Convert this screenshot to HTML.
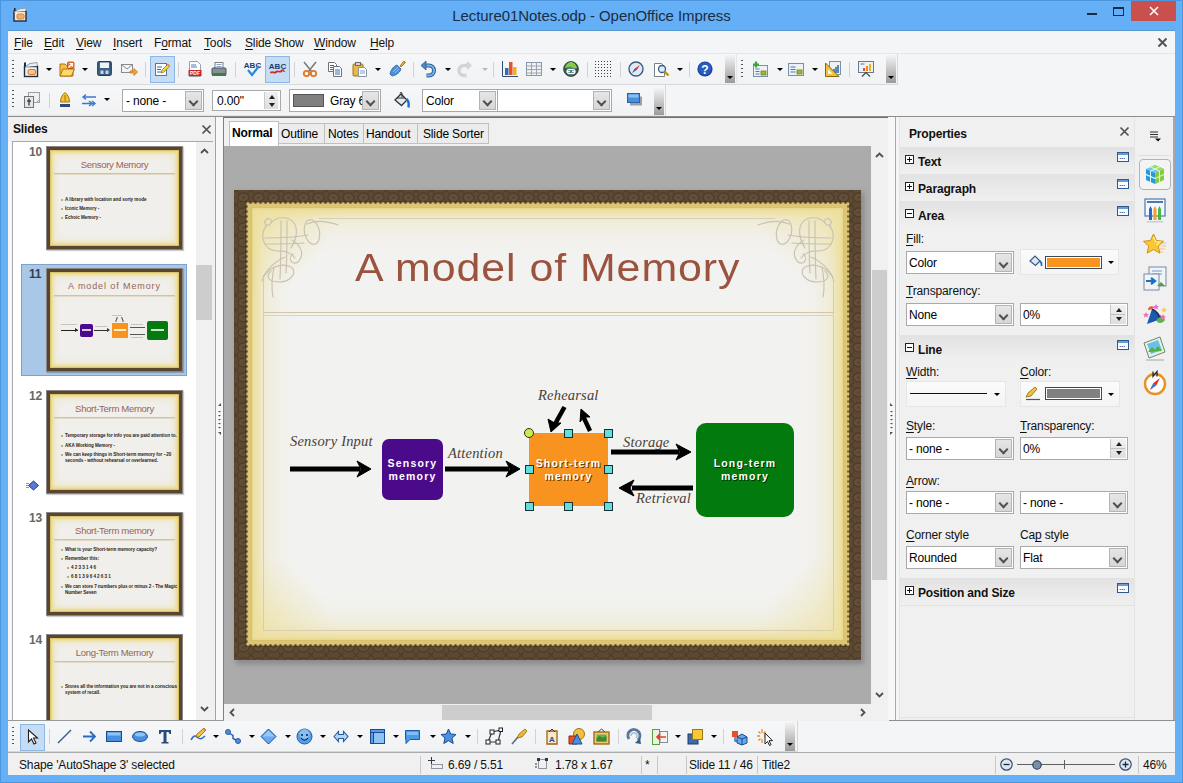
<!DOCTYPE html>
<html><head><meta charset="utf-8">
<style>
*{box-sizing:border-box}
body{margin:0;width:1183px;height:783px;position:relative;overflow:hidden;background:#64aff6;font-family:"Liberation Sans",sans-serif;font-size:12px;color:#000}
.a{position:absolute}
.t{position:absolute;white-space:nowrap;line-height:1}
.ul{text-decoration:underline;text-underline-offset:2px;text-decoration-thickness:1px}
svg{position:absolute;overflow:visible}
.dd{position:absolute;width:0;height:0;border-left:3px solid transparent;border-right:3px solid transparent;border-top:3px solid #000}
.sep{position:absolute;width:1px;background:#d0d2d5}
.grip{position:absolute;width:2px;background:repeating-linear-gradient(#555 0 1px,transparent 1px 4px)}
.combo{position:absolute;background:#fff;border:1px solid #a9a9a9}
.cbtn{position:absolute;top:1px;bottom:1px;right:1px;width:17px;background:linear-gradient(#e6e6e6,#d6d6d6);border:1px solid #b4b4b4}
.cbtn:after{content:"";position:absolute;left:4px;top:6px;width:5px;height:5px;border-right:2px solid #505050;border-bottom:2px solid #505050;transform:rotate(45deg)}
</style></head><body>
<!-- window frame -->
<div class="a" style="left:0;top:0;width:1183px;height:1px;background:#4c96de"></div>
<div class="a" style="left:0;top:0;width:1px;height:783px;background:#4c96de"></div>
<div class="a" style="right:0;top:0;width:1px;height:783px;background:#4c96de"></div>
<div class="a" style="left:0;bottom:0;width:1183px;height:1px;background:#4c96de"></div>
<!-- app icon -->
<svg style="left:13px;top:7px" width="14" height="15"><rect x="1" y="4" width="12" height="10" fill="#f4e8d8" stroke="#1c2a40" stroke-width="1.4"/><rect x="4" y="7" width="7" height="5" rx="1.5" fill="#f0b070" stroke="#d07020" stroke-width=".8"/><path d="M1 5L6 2L13 1L13 4" fill="#e6ecf2" stroke="#8a9ab0" stroke-width="1"/><rect x="1" y="1" width="1.5" height="3" fill="#1c2a40"/></svg>
<!-- title -->
<div class="t" style="left:0;width:1183px;top:8px;text-align:center;font-size:15px;color:#1c2c42;letter-spacing:-.08px">Lecture01Notes.odp - OpenOffice Impress</div>
<!-- title buttons -->
<div class="a" style="left:1087px;top:13px;width:10px;height:2px;background:#1c2c42"></div>
<div class="a" style="left:1113px;top:7px;width:11px;height:9px;border:1px solid #1c2c42;border-top-width:2px"></div>
<div class="a" style="left:1131px;top:1px;width:45px;height:20px;background:#c9504d"></div>
<svg style="left:1149px;top:6px" width="10" height="10"><path d="M1 1L9 9M9 1L1 9" stroke="#fff" stroke-width="1.5"/></svg>
<div class="a" style="left:8px;top:30px;width:1167px;height:1px;background:#5a98d4"></div>
<!-- client -->
<div class="a" style="left:8px;top:31px;width:1167px;height:744px;background:#f4f5f7"></div>
<!-- menu -->
<div class="a" style="left:8px;top:53px;width:1167px;height:1px;background:#e4e6e9"></div>
<div class="t" style="left:14px;top:37px;font-size:12px;letter-spacing:-.15px;color:#111">
<span class="a" style="left:0"><span class="ul">F</span>ile</span>
<span class="a" style="left:30px"><span class="ul">E</span>dit</span>
<span class="a" style="left:62px"><span class="ul">V</span>iew</span>
<span class="a" style="left:99px"><span class="ul">I</span>nsert</span>
<span class="a" style="left:140px">F<span class="ul">o</span>rmat</span>
<span class="a" style="left:190px"><span class="ul">T</span>ools</span>
<span class="a" style="left:231px"><span class="ul">S</span>lide Show</span>
<span class="a" style="left:300px"><span class="ul">W</span>indow</span>
<span class="a" style="left:356px"><span class="ul">H</span>elp</span>
</div>
<svg style="left:1158px;top:38px" width="9" height="9"><path d="M.5 .5L8.5 8.5M8.5 .5L.5 8.5" stroke="#505050" stroke-width="1.8"/></svg>
<!-- toolbar row 1 -->
<div class="a" style="left:8px;top:54px;width:890px;height:31px;background:linear-gradient(#f6f7f9,#f1f2f4);border-bottom:1px solid #d6d8db"></div>
<div class="a" style="left:736px;top:54px;width:162px;height:31px;border-right:1px solid #d6d8db;border-left:1px solid #e6e8ea"></div>
<div class="grip" style="left:12px;top:60px;height:18px"></div>
<!-- new -->
<svg style="left:23px;top:61px" width="16" height="16"><rect x="1.5" y="5.5" width="13" height="10" fill="#f6efe6" stroke="#1e2d45" stroke-width="1.4"/><rect x="5" y="8.5" width="7.5" height="5" rx="1.5" fill="#f6c48e" stroke="#d9782a"/><path d="M2 6L7 2.5L14 1.5L14.5 5" fill="#e8eef4" stroke="#8e9cb0"/><rect x="1" y="1.5" width="2" height="4" fill="#1e2d45"/></svg>
<div class="dd" style="left:46px;top:68px"></div>
<!-- open -->
<svg style="left:59px;top:61px" width="16" height="16"><path d="M1 3h5l1.5 1.5H14V15H1z" fill="#f6c040" stroke="#a87410"/><path d="M1 15l3-7h11.5l-3 7z" fill="#ffd86a" stroke="#a87410"/><rect x="8.5" y="1" width="6.5" height="6.5" rx="1" fill="#f08040" stroke="#b04a10" stroke-width=".8"/><path d="M9.5 6.5l4-4M10.5 2.5h3v3" stroke="#fff" stroke-width="1.2" fill="none"/></svg>
<div class="dd" style="left:82px;top:68px"></div>
<!-- save -->
<svg style="left:97px;top:61px" width="15" height="15"><rect x=".7" y=".7" width="13.6" height="13.6" rx="1.5" fill="#3e6286" stroke="#24405e" stroke-width="1.2"/><rect x="3" y="1.5" width="9" height="5.5" fill="#eef2f6"/><rect x="3.5" y="9.5" width="3" height="3.5" fill="#c8d4e0"/><rect x="8.5" y="9.5" width="3" height="3.5" fill="#c8d4e0"/></svg>
<!-- mail -->
<svg style="left:121px;top:61px" width="17" height="16"><rect x=".5" y="3.5" width="11" height="8" fill="#f4f4f4" stroke="#8c8c8c"/><path d="M.5 3.5l5.5 4.5 5.5-4.5" fill="none" stroke="#8c8c8c"/><path d="M9 10h4V7.5l3.5 3.5-3.5 3.5V12H9z" fill="#f5a63a" stroke="#c97410" stroke-width=".8"/></svg>
<div class="sep" style="left:145px;top:62px;height:15px"></div>
<!-- edit toggle -->
<div class="a" style="left:150px;top:56px;width:25px;height:27px;background:#c4dcf4;border:1px solid #8db6e2"></div>
<svg style="left:154px;top:61px" width="16" height="16"><rect x="1.5" y="2.5" width="11" height="12" fill="#fff" stroke="#6a7480"/><path d="M3 6h5M3 8.5h4M3 11h4" stroke="#3a6aa8"/><path d="M7 12l1-3 6-6 2 2-6 6z" fill="#f8d040" stroke="#9a7a10" stroke-width=".8"/><path d="M13 4l2 2 1-1-2-2z" fill="#e89090"/></svg>
<div class="sep" style="left:178px;top:62px;height:15px"></div>
<!-- pdf -->
<svg style="left:187px;top:61px" width="16" height="16"><path d="M2.5 .5h8l3 3v12h-11z" fill="#fff" stroke="#9aa0a8"/><path d="M4 4h5M4 6h6" stroke="#4b7ac0"/><rect x="1.5" y="9" width="13" height="6" fill="#c8262a"/><text x="8" y="14" font-size="5" font-family="Liberation Sans" font-weight="bold" fill="#fff" text-anchor="middle">PDF</text></svg>
<!-- print -->
<svg style="left:211px;top:61px" width="16" height="16"><rect x="4" y="1.5" width="8" height="6" fill="#fff" stroke="#7a8088"/><path d="M5.5 3.5h5M5.5 5.5h5" stroke="#6a8ab8" stroke-width=".8"/><rect x="1" y="7" width="14" height="7" rx="1" fill="#8a9098" stroke="#4a5058"/><rect x="1" y="12" width="14" height="3" fill="#3e7a4a"/></svg>
<div class="sep" style="left:235px;top:62px;height:15px"></div>
<!-- spell -->
<svg style="left:244px;top:60px" width="17" height="17"><text x="8.5" y="8" font-size="8" font-family="Liberation Sans" font-weight="bold" fill="#1e3a70" text-anchor="middle">ABC</text><path d="M4 10l4 5 7-9" fill="none" stroke="#2a8ae0" stroke-width="2.2"/></svg>
<!-- autospell toggle -->
<div class="a" style="left:265px;top:56px;width:25px;height:27px;background:#c4dcf4;border:1px solid #8db6e2"></div>
<svg style="left:269px;top:60px" width="17" height="17"><text x="8.5" y="9" font-size="8" font-family="Liberation Sans" font-weight="bold" fill="#1e3a70" text-anchor="middle">ABC</text><path d="M1.5 13c2-2.5 3.5 1 5.5-1s3.5 1 5.5-1 2.5.5 3 0" fill="none" stroke="#d22828" stroke-width="1.8"/></svg>
<div class="sep" style="left:294px;top:62px;height:15px"></div>
<!-- cut -->
<svg style="left:302px;top:61px" width="16" height="16"><path d="M2 1l8 10M14 1L6 11" stroke="#7a7a7a" stroke-width="1.5"/><circle cx="4.5" cy="12.5" r="2.7" fill="none" stroke="#e0782a" stroke-width="1.8"/><circle cx="11.5" cy="12.5" r="2.7" fill="none" stroke="#e0782a" stroke-width="1.8"/></svg>
<!-- copy -->
<svg style="left:327px;top:61px" width="16" height="16"><path d="M1.5 1.5h6l2 2v7h-8z" fill="#fff" stroke="#6a7480"/><path d="M3 4.5h4M3 6.5h4M3 8.5h3" stroke="#3a6ab0"/><path d="M6.5 5.5h6l2 2v8h-8z" fill="#fff" stroke="#6a7480"/><path d="M8 9h5M8 11h5M8 13h5" stroke="#3a6ab0"/></svg>
<!-- paste -->
<svg style="left:352px;top:61px" width="16" height="16"><rect x="1" y="3" width="10" height="12" rx="1" fill="#e8b848" stroke="#9a7420"/><rect x="3.5" y="1.5" width="5" height="3" fill="#d0d4d8" stroke="#6a6e72"/><path d="M6.5 6.5h6l2 2v7h-8z" fill="#fff" stroke="#8a94a0"/><path d="M8 10h5M8 12h5" stroke="#5a86c0" stroke-width=".8"/></svg>
<div class="dd" style="left:375px;top:68px"></div>
<!-- clone brush -->
<svg style="left:389px;top:60px" width="17" height="17"><path d="M11 6l4-5 1.5 1.5-4.5 4.5z" fill="#e8a830" stroke="#9a6a10" stroke-width=".8"/><path d="M1 14c1-5 4-8 7-9l4 4c-1 3-4 6-9 7z" fill="#4a90d8" stroke="#2a5a98" stroke-width=".8"/><path d="M4 12l5-5M6 13l4-4" stroke="#a8d0f8" stroke-width=".8"/></svg>
<div class="sep" style="left:413px;top:62px;height:15px"></div>
<!-- undo -->
<svg style="left:420px;top:61px" width="17" height="16"><path d="M4.5 4.5H9a5 5 0 0 1 0 10H6.5" fill="none" stroke="#2a5e96" stroke-width="4"/><path d="M4.5 4.5H9a5 5 0 0 1 0 10H6.5" fill="none" stroke="#7ab4e8" stroke-width="2"/><path d="M1 4.5L6 0v9z" fill="#4a86c8" stroke="#2a5e96" stroke-width=".8"/></svg>
<div class="dd" style="left:445px;top:68px"></div>
<!-- redo disabled -->
<svg style="left:457px;top:61px" width="16" height="16"><path d="M11.5 4.5H7a5 5 0 0 0 0 10h2.5" fill="none" stroke="#d2d4d6" stroke-width="3.5"/><path d="M15 4.5L10 0v9z" fill="#d2d4d6"/></svg>
<div class="dd" style="left:482px;top:68px;border-top-color:#b8b8b8"></div>
<div class="sep" style="left:493px;top:62px;height:15px"></div>
<!-- chart -->
<svg style="left:502px;top:61px" width="16" height="16"><path d="M.5 0v15.5H16" fill="none" stroke="#2a4a78"/><rect x="3" y="7" width="3.5" height="7" fill="#3a6aa8"/><rect x="7" y="1" width="3.5" height="13" fill="#e8502a"/><rect x="11" y="6" width="3.5" height="8" fill="#f0b020"/></svg>
<!-- table -->
<svg style="left:526px;top:62px" width="16" height="14"><rect x=".5" y=".5" width="15" height="13" fill="#f0f2f4" stroke="#8a96a6"/><path d="M.5 4h15M.5 7.5h15M.5 11h15M5.5 .5v13M10.5 .5v13" stroke="#9aa6b4"/></svg>
<div class="dd" style="left:550px;top:68px"></div>
<!-- globe -->
<svg style="left:563px;top:61px" width="16" height="16"><circle cx="8" cy="8" r="7.4" fill="#3a5a48" stroke="#22342a" stroke-width=".8"/><path d="M2 7c1-4 4-6 6-6s5 2 6 6c-2 1-4 0-6-1s-4 1-6 1z" fill="#8acc48"/><circle cx="8" cy="10" r="4.5" fill="#6aa0b0" opacity=".6"/><path d="M4 10.5h3M9 10.5h3" stroke="#fff" stroke-width="1.6"/><rect x="4" y="8.5" width="8" height="4" rx="2" fill="none" stroke="#fff" stroke-width="1.2"/></svg>
<div class="sep" style="left:587px;top:62px;height:15px"></div>
<!-- grid -->
<svg style="left:595px;top:61px" width="17" height="16"><g fill="#303030"><rect x="0" y="0" width="1" height="1"/></g><path d="M0 .5h17M0 3.5h17M0 6.5h17M0 9.5h17M0 12.5h17M0 15.5h17" stroke="#404040" stroke-dasharray="1 2"/></svg>
<div class="sep" style="left:620px;top:62px;height:15px"></div>
<!-- navigator -->
<svg style="left:628px;top:61px" width="16" height="16"><circle cx="8" cy="8" r="7" fill="#dceaf6" stroke="#405878" stroke-width="1.4"/><path d="M12 4L7 7.5 4 12l5-3.5z" fill="#e02a2a"/><path d="M7 7.5l2 1L4 12z" fill="#2a6ad0"/></svg>
<!-- zoom -->
<svg style="left:653px;top:61px" width="16" height="16"><path d="M1.5 2.5h7l3 3v10h-10z" fill="#fff" stroke="#7a8088"/><circle cx="9" cy="8" r="3.5" fill="#d8ecfa" stroke="#3a5a80" stroke-width="1.3"/><path d="M11.5 10.5l4 4" stroke="#c88a20" stroke-width="2.4"/></svg>
<div class="dd" style="left:677px;top:68px"></div>
<div class="sep" style="left:689px;top:62px;height:15px"></div>
<!-- help -->
<svg style="left:697px;top:61px" width="16" height="16"><circle cx="8" cy="8" r="7.6" fill="#1a44a0"/><circle cx="8" cy="7.5" r="6.3" fill="#2a5cc0"/><text x="8" y="12.5" font-size="12" font-family="Liberation Sans" font-weight="bold" fill="#fff" text-anchor="middle">?</text></svg>
<!-- overflow -->
<div class="a" style="left:725px;top:55px;width:10px;height:28px;background:linear-gradient(#f4f4f4,#9a9a9a)"></div>
<div class="dd" style="left:727px;top:76px;border-left-width:3px;border-right-width:3px"></div>
<!-- toolbar 2 -->
<div class="grip" style="left:741px;top:60px;height:18px"></div>
<svg style="left:752px;top:61px" width="16" height="16"><rect x="1.5" y="4.5" width="14" height="11" fill="#eef2f6" stroke="#7890a8"/><path d="M3.5 8h4M3.5 10.5h4M3.5 13h4" stroke="#4a7ac0"/><rect x="9" y="10" width="5" height="4" fill="#9ab838" stroke="#6a8a18" stroke-width=".8"/><path d="M4 .5v6M1 3.5h6" stroke="#38a830" stroke-width="2.2"/></svg>
<div class="dd" style="left:777px;top:68px"></div>
<svg style="left:788px;top:62px" width="16" height="15"><rect x=".5" y="1.5" width="15" height="12" fill="#eef2f6" stroke="#7890a8"/><path d="M2.5 5h5M2.5 7.5h5M2.5 10h5" stroke="#4a7ac0"/><rect x="9" y="8" width="5" height="4" fill="#9ab838" stroke="#6a8a18" stroke-width=".8"/></svg>
<div class="dd" style="left:812px;top:68px"></div>
<svg style="left:825px;top:61px" width="16" height="16"><rect x="4.5" y=".5" width="11" height="13" fill="#eef2f6" stroke="#7890a8"/><path d="M9 8v4M11 6v6M13 4v8" stroke="#3a6aa8" stroke-width="1.6"/><path d="M.5 2v13.5H14z" fill="#f2c030" stroke="#8a6a10"/><path d="M3 8v5h5z" fill="#eef2f6"/></svg>
<div class="sep" style="left:849px;top:62px;height:15px"></div>
<svg style="left:858px;top:61px" width="16" height="16"><rect x=".5" y=".5" width="15" height="11" fill="#eef2f6" stroke="#6a7890"/><path d="M2.5 3h4" stroke="#4a7ac0"/><rect x="5" y="7" width="2" height="3" fill="#e0502a"/><rect x="8" y="5" width="2" height="5" fill="#f08a20"/><rect x="11" y="3" width="2" height="7" fill="#f0b020"/><path d="M4 15.5l4-4 4 4" fill="none" stroke="#404850" stroke-width="1.2"/></svg>
<div class="a" style="left:886px;top:55px;width:10px;height:28px;background:linear-gradient(#f4f4f4,#9a9a9a)"></div>
<div class="dd" style="left:888px;top:76px"></div>

<!-- toolbar row 2 -->
<div class="a" style="left:8px;top:85px;width:658px;height:31px;background:linear-gradient(#f6f7f9,#f1f2f4);border-right:1px solid #d6d8db;border-bottom:1px solid #e0e2e5"></div>
<div class="grip" style="left:12px;top:90px;height:18px"></div>
<svg style="left:24px;top:92px" width="16" height="16"><rect x="4.5" y=".5" width="11" height="10" fill="#eef0f2" stroke="#9aa0a8"/><path d="M12.5 10.5l3-3" stroke="#9aa0a8"/><rect x=".5" y="4.5" width="9" height="11" fill="#e4e6e8" stroke="#707478"/><path d="M5 6.5v7M3 9h4" stroke="#404448" stroke-width="1.4"/></svg>
<div class="sep" style="left:49px;top:93px;height:15px"></div>
<svg style="left:58px;top:92px" width="14" height="16"><path d="M7 .5C4 3 2.5 6 2.5 10h9C11.5 6 10 3 7 .5z" fill="#f6c030" stroke="#a07810"/><path d="M7 3v6" stroke="#a07810"/><rect x="2" y="12" width="10" height="3" fill="#2a4a80"/></svg>
<svg style="left:81px;top:94px" width="16" height="13"><path d="M15 3H2M5 .5L2 3l3 2.5" fill="none" stroke="#3a7ad0" stroke-width="1.4"/><path d="M1 9.5h13M11 7l3 2.5-3 2.5M8 7l3 2.5-3 2.5" fill="none" stroke="#3a7ad0" stroke-width="1.4"/></svg>
<div class="dd" style="left:104px;top:98px"></div>
<div class="combo" style="left:122px;top:89px;width:82px;height:23px"><div class="t" style="left:3px;top:5px;font-size:12px;letter-spacing:-.15px">- none -</div><div class="cbtn"></div></div>
<div class="combo" style="left:212px;top:90px;width:69px;height:21px"><div class="t" style="left:4px;top:4px;font-size:12px;letter-spacing:-.15px">0.00"</div>
<div class="a" style="right:2px;top:1px;width:14px;height:17px;background:linear-gradient(#f0f0f0,#dcdcdc);border-left:1px solid #c8c8c8"></div>
<div class="a" style="right:5px;top:4px;width:0;height:0;border-left:3.5px solid transparent;border-right:3.5px solid transparent;border-bottom:4px solid #202020"></div>
<div class="a" style="right:5px;top:12px;width:0;height:0;border-left:3.5px solid transparent;border-right:3.5px solid transparent;border-top:4px solid #202020"></div></div>
<div class="combo" style="left:289px;top:89px;width:92px;height:23px"><div class="a" style="left:3px;top:4px;width:31px;height:13px;background:#808080;border:1px solid #555"></div><div class="t" style="left:40px;top:5px;font-size:12px;letter-spacing:-.15px">Gray 6</div><div class="cbtn"></div></div>
<svg style="left:393px;top:92px" width="17" height="16"><path d="M2 8l6-6 6 6-5.5 5.5z" fill="#e4e8ec" stroke="#303438" stroke-width="1.3"/><path d="M4 6h8" stroke="#303438"/><path d="M7 1.5c0-1.5 2-1.5 2 0v4" fill="none" stroke="#303438"/><path d="M13.5 7c2.5 2 2.5 5 2 8.5" fill="none" stroke="#1a70d0" stroke-width="2.4"/></svg>
<div class="combo" style="left:422px;top:89px;width:76px;height:23px"><div class="t" style="left:3px;top:5px;font-size:12px;letter-spacing:-.15px">Color</div><div class="cbtn"></div></div>
<div class="combo" style="left:497px;top:89px;width:115px;height:23px"><div class="cbtn"></div></div>
<svg style="left:627px;top:93px" width="16" height="14"><rect x="3" y="3.5" width="12" height="9" fill="#9aa0a8"/><rect x=".5" y=".5" width="12" height="9" fill="#4a90e0" stroke="#2a60a8"/><rect x="1.5" y="1.5" width="10" height="3" fill="#8ac0f0"/></svg>
<div class="a" style="left:654px;top:88px;width:10px;height:27px;background:linear-gradient(#f4f4f4,#9a9a9a)"></div>
<div class="dd" style="left:656px;top:107px"></div>
<div class="a" style="left:8px;top:116px;width:1167px;height:1px;background:#8c8e90"></div>
<style>
.th{position:absolute;left:46px;width:137px;height:104px;background:#5a4530;border:1px solid #8a8580;box-shadow:1px 1px 1px rgba(0,0,0,.2)}
.th .g{position:absolute;left:3px;top:3px;right:3px;bottom:3px;background:#f0efec;box-shadow:inset 0 0 1px 1px #d8c068,inset 0 0 3px 3px #ecdc90,inset 0 0 8px 3px rgba(238,224,160,.8)}
.th .sl{position:absolute;left:7px;right:7px;top:26px;height:2px;border-top:1px solid #cfc3a0;border-bottom:1px solid #e2dac2}
.th .tt{position:absolute;left:0;right:0;top:13px;text-align:center;font-size:9.6px;color:#9a6450;white-space:nowrap;line-height:1;letter-spacing:-.35px}
.th .bl{position:absolute;left:18px;font-size:4.6px;font-weight:bold;color:#2e1e14;white-space:nowrap;line-height:1;letter-spacing:-.05px}
.th .bl.nb:before{display:none}
.th .bl:before{content:"";position:absolute;left:-4px;top:1px;width:2px;height:2px;background:#b8b070}
.num{position:absolute;left:29px;font-size:12px;font-weight:bold;color:#666;line-height:1;letter-spacing:-.2px;margin-top:-1px}
</style>
<div class="a" style="left:8px;top:117px;width:207px;height:604px;background:#f0f0f0"></div>
<div class="a" style="left:215px;top:117px;width:1px;height:604px;background:#a2a2a2"></div>
<div class="a" style="left:219px;top:117px;width:4px;height:604px;background:#f0f0f0"></div>
<div class="t" style="left:13px;top:123px;font-size:12px;letter-spacing:-.15px;font-weight:bold;color:#111">Slides</div>
<svg style="left:202px;top:125px" width="9" height="9"><path d="M.5 .5L8.5 8.5M8.5 .5L.5 8.5" stroke="#505050" stroke-width="1.7"/></svg>
<div class="a" style="left:8px;top:142px;width:4px;height:578px;background:#f7f7f7"></div>
<div class="a" style="left:12px;top:141px;width:201px;height:1px;background:#a8a8a8"></div>
<div class="a" style="left:12px;top:142px;width:200px;height:578px;background:#fff;border-left:1px solid #a8a8a8"></div>
<div class="a" style="left:196px;top:142px;width:16px;height:578px;background:#f0f0f0"></div>
<div class="a" style="left:196px;top:265px;width:16px;height:55px;background:#cdcdcd"></div>
<svg style="left:200px;top:148px" width="9" height="6"><path d="M1 5L4.5 1.5 8 5" fill="none" stroke="#505050" stroke-width="1.8"/></svg>
<svg style="left:200px;top:706px" width="9" height="6"><path d="M1 1L4.5 4.5 8 1" fill="none" stroke="#505050" stroke-width="1.8"/></svg>
<!-- selected bg for slide 11 -->
<div class="a" style="left:21px;top:264px;width:166px;height:112px;background:#a9c8e8;border:1px solid #7da3cb"></div>

<div class="num" style="top:147px">10</div>
<div class="th" style="top:146px"><div class="g"></div><div class="sl"></div><div class="tt">Sensory Memory</div>
<div class="bl" style="top:51px">A library with location and sorty mode</div>
<div class="bl" style="top:60px">Iconic Memory -</div>
<div class="bl" style="top:69px">Echoic Memory -</div></div>

<div class="num" style="top:269px;color:#34404e">11</div>
<div class="th" style="top:268px"><div class="g"></div><div class="sl"></div><div class="tt" style="letter-spacing:.9px;font-size:9px;top:13px">A model of Memory</div>
<div class="a" style="left:14px;top:61px;width:17px;height:1px;background:#222"></div>
<div class="a" style="left:28px;top:59px;border-left:3px solid #222;border-top:2px solid transparent;border-bottom:2px solid transparent"></div>
<div class="a" style="left:33px;top:55px;width:13px;height:13px;background:#4b0a8c;border-radius:2px"></div>
<div class="a" style="left:47px;top:61px;width:14px;height:1px;background:#333"></div>
<div class="a" style="left:60px;top:59px;border-left:3px solid #333;border-top:2px solid transparent;border-bottom:2px solid transparent"></div>
<div class="a" style="left:65px;top:54px;width:16px;height:15px;background:#f7931e"></div>
<div class="a" style="left:83px;top:58px;width:15px;height:1px;background:#555"></div>
<div class="a" style="left:83px;top:65px;width:15px;height:1px;background:#555"></div>
<div class="a" style="left:100px;top:52px;width:21px;height:19px;background:#067a10;border-radius:2px"></div>
<div class="a" style="left:35px;top:60px;width:9px;height:2px;background:#d8c8f0"></div>
<div class="a" style="left:67px;top:60px;width:12px;height:2px;background:#fff0d0"></div>
<div class="a" style="left:104px;top:60px;width:13px;height:2px;background:#c0f0c0"></div>
<div class="a" style="left:14px;top:55px;width:16px;height:1px;background:#c8c4bc"></div>
<div class="a" style="left:48px;top:57px;width:12px;height:1px;background:#c8c4bc"></div>
<div class="a" style="left:84px;top:55px;width:12px;height:1px;background:#c8c4bc"></div>
<div class="a" style="left:84px;top:68px;width:12px;height:1px;background:#c8c4bc"></div>
<div class="a" style="left:65px;top:46px;width:10px;height:1px;background:#c8c4bc"></div>
<div class="a" style="left:69px;top:48px;width:1px;height:5px;background:#444;transform:rotate(20deg)"></div>
<div class="a" style="left:75px;top:48px;width:1px;height:5px;background:#444;transform:rotate(-20deg)"></div>
</div>

<div class="num" style="top:391px">12</div>
<div class="th" style="top:390px"><div class="g"></div><div class="sl"></div><div class="tt">Short-Term Memory</div>
<div class="bl" style="top:43px">Temporary storage for info you are paid attention to.</div>
<div class="bl" style="top:53px">AKA Working Memory -</div>
<div class="bl" style="top:62px">We can keep things in Short-term memory for ~20</div>
<div class="bl nb" style="top:68px;left:18px">seconds - without rehearsal or overlearned.</div></div>
<svg style="left:26px;top:480px" width="14" height="11"><path d="M7.5 1l5 4.5-5 4.5-5-4.5z" fill="#5a78d8" stroke="#203880"/><path d="M0 3.5h3M0 5.5h2M0 7.5h3" stroke="#6a78a0" stroke-width=".8"/></svg>

<div class="num" style="top:513px">13</div>
<div class="th" style="top:512px"><div class="g"></div><div class="sl"></div><div class="tt">Short-Term memory</div>
<div class="bl" style="top:35px">What is your Short-term memory capacity?</div>
<div class="bl" style="top:44px">Remember this:</div>
<div class="bl" style="top:53px;left:24px">4 2 3 3 1 4 6</div>
<div class="bl" style="top:62px;left:24px">6 8 1 3 9 6 4 2 6 3 1</div>
<div class="bl" style="top:72px">We can store 7 numbers plus or minus 2 - The Magic</div>
<div class="bl nb" style="top:78px;left:18px">Number Seven</div></div>

<div class="num" style="top:635px">14</div>
<div class="th" style="top:634px;height:87px;border-bottom:none;box-shadow:none"><div class="g" style="bottom:-20px"></div><div class="sl"></div><div class="tt">Long-Term Memory</div>
<div class="bl" style="top:50px">Stores all the information you are not in a conscious</div>
<div class="bl nb" style="top:56px;left:18px">system of recall.</div></div>
<div class="a" style="left:12px;top:720px;width:200px;height:1px;background:#a8a8a8"></div>
<!-- main area -->
<div class="a" style="left:223px;top:117px;width:666px;height:604px;background:#f0f0f0;border-left:1px solid #808080;border-top:1px solid #707070"></div>
<div class="a" style="left:888px;top:117px;width:1px;height:604px;background:#e8e8e8"></div>
<!-- tabs -->
<div class="a" style="left:277px;top:123px;width:48px;height:21px;background:#ececec;border:1px solid #c0c0c0"></div>
<div class="a" style="left:324px;top:123px;width:40px;height:21px;background:#ececec;border:1px solid #c0c0c0"></div>
<div class="a" style="left:363px;top:123px;width:55px;height:21px;background:#ececec;border:1px solid #c0c0c0"></div>
<div class="a" style="left:417px;top:123px;width:72px;height:21px;background:#ececec;border:1px solid #c0c0c0"></div>
<div class="a" style="left:229px;top:121px;width:50px;height:25px;background:#fff;border:1px solid #c0c0c0;border-bottom:none"></div>
<div class="t" style="left:232px;top:127px;font-size:12px;letter-spacing:-.15px;font-weight:bold">Normal</div>
<div class="t" style="left:281px;top:128px;font-size:12px;letter-spacing:-.15px">Outline</div>
<div class="t" style="left:328px;top:128px;font-size:12px;letter-spacing:-.15px">Notes</div>
<div class="t" style="left:366px;top:128px;font-size:12px;letter-spacing:-.15px">Handout</div>
<div class="t" style="left:423px;top:128px;font-size:12px;letter-spacing:-.15px">Slide Sorter</div>
<!-- canvas -->
<div class="a" style="left:224px;top:146px;width:647px;height:558px;background:#ababab;overflow:hidden">
  <div class="a" style="left:12px;top:46px;width:628px;height:472px;background:#8a8a8a;filter:blur(2.5px)"></div>
</div>
<!-- vertical scrollbar -->
<div class="a" style="left:871px;top:146px;width:17px;height:558px;background:#f0f0f0"></div>
<div class="a" style="left:872px;top:270px;width:15px;height:310px;background:#cdcdcd"></div>
<svg style="left:875px;top:152px" width="9" height="6"><path d="M1 5L4.5 1.5 8 5" fill="none" stroke="#505050" stroke-width="1.8"/></svg>
<svg style="left:875px;top:692px" width="9" height="6"><path d="M1 1L4.5 4.5 8 1" fill="none" stroke="#505050" stroke-width="1.8"/></svg>
<!-- horizontal scrollbar -->
<div class="a" style="left:224px;top:704px;width:647px;height:17px;background:#f0f0f0"></div>
<div class="a" style="left:442px;top:705px;width:210px;height:15px;background:#cdcdcd"></div>
<svg style="left:229px;top:708px" width="6" height="9"><path d="M5 1L1.5 4.5 5 8" fill="none" stroke="#505050" stroke-width="1.8"/></svg>
<svg style="left:860px;top:708px" width="6" height="9"><path d="M1 1L4.5 4.5 1 8" fill="none" stroke="#505050" stroke-width="1.8"/></svg>
<!-- splitter -->
<div class="a" style="left:216px;top:117px;width:7px;height:604px;background:#f7f7f7"></div>
<div class="a" style="left:888px;top:117px;width:7px;height:604px;background:#f7f7f7"></div>
<svg style="left:217px;top:402px" width="5" height="34"><g fill="#505050"><path d="M1 4l3-3v3z"/><path d="M1 9h3l-1.5 1.5zM1 13h3l-1.5 1.5zM1 17h3l-1.5 1.5zM1 21h3l-1.5 1.5zM1 25h3l-1.5 1.5z"/><path d="M1 30l3 3v-3z"/></g></svg>
<svg style="left:889px;top:402px" width="5" height="34"><g fill="#505050"><path d="M1 1l3 3H1z"/><path d="M1 9h3l-1.5 1.5zM1 13h3l-1.5 1.5zM1 17h3l-1.5 1.5zM1 21h3l-1.5 1.5zM1 25h3l-1.5 1.5z"/><path d="M1 30h3l-3 3z"/></g></svg>
<!-- slide -->
<div class="a" style="left:234px;top:190px;width:627px;height:470px;overflow:hidden;background:#5c4832">
  <svg style="left:0;top:0" width="627" height="470">
   <defs>
    <pattern id="dam" width="15" height="15" patternUnits="userSpaceOnUse" x="2" y="0">
      <rect width="15" height="15" fill="#5d4933"/>
      <ellipse cx="7.5" cy="7.5" rx="5.5" ry="4.5" fill="#634e38" stroke="#4f3d2a" stroke-width="1.5"/>
      <path d="M0 0l3 3M15 0l-3 3M0 15l3-3M15 15l-3-3" stroke="#4f3d2a" stroke-width="1.3"/>
      <circle cx="7.5" cy="7.5" r="1.2" fill="#54412c"/>
    </pattern>
    <pattern id="scal" width="5" height="5" patternUnits="userSpaceOnUse" x="1.5" y="1.5">
      <circle cx="2.5" cy="2.5" r="1.9" fill="#d6c070"/>
    </pattern>
   </defs>
   <rect width="627" height="470" fill="url(#dam)"/>
   <rect x="12" y="12" width="603" height="444" fill="none" stroke="#46341f" stroke-width="2"/>
   <rect x="11.5" y="11.5" width="604" height="445" fill="url(#scal)"/>
  </svg>
  <!-- gold + interior -->
  <div class="a" style="left:14px;top:14px;width:599px;height:440px;background:radial-gradient(circle 90px at 0 0,rgba(236,220,140,.75),transparent),radial-gradient(circle 90px at 100% 0,rgba(236,220,140,.6),transparent),radial-gradient(circle 90px at 0 100%,rgba(236,220,140,.7),transparent),radial-gradient(circle 90px at 100% 100%,rgba(236,220,140,.6),transparent),#f2f2f0;box-shadow:inset 0 0 0 3px #dcc676,inset 0 0 0 4px #d8c270,inset 0 0 2px 5px #e6d488,inset 0 0 8px 10px #eedf9c,inset 0 0 30px 14px rgba(238,226,166,.75)"></div>
<!-- inner frame line -->
  <div class="a" style="left:85px;top:28px;width:456px;height:1px;background:#d6ceb0"></div>
  <div class="a" style="left:29px;top:89px;width:1px;height:352px;background:#d6ceb0"></div>
  <div class="a" style="left:599px;top:89px;width:1px;height:352px;background:#d6ceb0"></div>
  <div class="a" style="left:29px;top:440px;width:571px;height:1px;background:#d6ceb0"></div>
  <div class="a" style="left:29px;top:122px;width:571px;height:4px;border-top:1px solid #d0c5a4;border-bottom:1px solid #ddd4b8"></div>
  <!-- flourishes -->
  <svg style="left:28px;top:27px" width="80" height="82"><g fill="none" stroke="#c8c2b4" stroke-width="1.15" stroke-linecap="round">
   <path d="M19 4C19 20 19 40 18 62M25 4C25 20 25 40 24 56"/>
   <path d="M3 21C15 21 30 21 46 18M3 27C15 27 30 27 42 26"/>
   <path d="M3 5C4 0 11 1 9 6 7 10 1 8 3 4"/>
   <path d="M9 6C15 -1 27 -1 32 6 36 12 35 22 29 31"/>
   <path d="M5 8C-2 16 0 29 10 33 18 36 25 31 33 41"/>
   <ellipse cx="50" cy="15" rx="7.5" ry="12.5" transform="rotate(-12 50 15)"/>
   <path d="M45 7C56 2 68 5 76 8"/>
   <path d="M30 23C38 28 43 36 37 44 31 50 25 42 31 37"/>
   <path d="M0 64C4 51 19 45 29 50 36 55 29 65 17 65 7 65 3 60 9 54"/>
   <path d="M12 50C10 60 9 70 11 80"/>
   <path d="M23 40C14 44 6 51 1 60"/>
  </g></svg>
  <svg style="left:522px;top:27px" width="80" height="82"><g transform="translate(78 0) scale(-1 1)"><g fill="none" stroke="#c8c2b4" stroke-width="1.15" stroke-linecap="round">
   <path d="M19 4C19 20 19 40 18 62M25 4C25 20 25 40 24 56"/>
   <path d="M3 21C15 21 30 21 46 18M3 27C15 27 30 27 42 26"/>
   <path d="M3 5C4 0 11 1 9 6 7 10 1 8 3 4"/>
   <path d="M9 6C15 -1 27 -1 32 6 36 12 35 22 29 31"/>
   <path d="M5 8C-2 16 0 29 10 33 18 36 25 31 33 41"/>
   <ellipse cx="50" cy="15" rx="7.5" ry="12.5" transform="rotate(-12 50 15)"/>
   <path d="M45 7C56 2 68 5 76 8"/>
   <path d="M30 23C38 28 43 36 37 44 31 50 25 42 31 37"/>
   <path d="M0 64C4 51 19 45 29 50 36 55 29 65 17 65 7 65 3 60 9 54"/>
   <path d="M12 50C10 60 9 70 11 80"/>
   <path d="M23 40C14 44 6 51 1 60"/>
  </g></g></svg>
  <!-- title -->
  <div class="t" style="left:121px;top:58px;font-size:39px;color:#9b5340;letter-spacing:.85px;transform:scaleX(1.1);transform-origin:0 0">A model of Memory</div>
</div>
<!-- diagram (absolute page coords) -->
<style>
.lbl{position:absolute;white-space:nowrap;line-height:1;font-family:"Liberation Serif",serif;font-style:italic;font-size:14.5px;color:#4a4038;letter-spacing:.2px}
.bx{position:absolute;color:#fff;font-weight:bold;font-size:10.5px;line-height:13px;text-align:center;letter-spacing:1.2px;margin-top:1px}
.hd{position:absolute;width:9px;height:9px;background:#5fdfe0;border:1px solid #1a3030}
</style>
<div class="lbl" style="left:290px;top:434px">Sensory Input</div>
<div class="lbl" style="left:448px;top:446px">Attention</div>
<div class="lbl" style="left:538px;top:388px">Rehearsal</div>
<div class="lbl" style="left:623px;top:435px">Storage</div>
<div class="lbl" style="left:636px;top:491px">Retrieval</div>
<svg style="left:0;top:0" width="1183" height="783">
 <g fill="#000" stroke="#000">
  <path d="M290 466.5h70v5h-70z" stroke="none"/><path d="M357 461l14 8-14 8 4-8z" stroke-width="1"/>
  <path d="M445 466.5h64v5h-64z" stroke="none"/><path d="M506 461l14 8-14 8 4-8z" stroke-width="1"/>
  <path d="M611 449.5h68v5h-68z" stroke="none"/><path d="M676 444l15 8-15 8 4-8z" stroke-width="1"/>
  <path d="M632 485.5h61v5h-61z" stroke="none"/><path d="M634 480l-15 8 15 8-4-8z" stroke-width="1"/>
  <path d="M562.5 406l4 2-10 18-4-2z" stroke="none"/><path d="M548 419l3 13 10-9-6.5 0z" stroke-width="1"/>
  <path d="M588 432l4-2-7-15-4 2z" stroke="none"/><path d="M580 422l1-13 9 8-6 0z" stroke-width="1"/>
 </g>
</svg>
<div class="a" style="left:382px;top:439px;width:61px;height:61px;background:#4a0a8a;border-radius:7px"></div>
<div class="bx" style="left:382px;top:456px;width:61px">Sensory<br>memory</div>
<div class="a" style="left:529px;top:433px;width:79px;height:73px;background:#f7931e"></div>
<div class="bx" style="left:529px;top:456px;width:79px;text-shadow:1px 1px 0 #6a3a00">Short-term<br>memory</div>
<div class="a" style="left:696px;top:423px;width:98px;height:94px;background:#037a0e;border-radius:10px"></div>
<div class="bx" style="left:696px;top:456px;width:98px;text-shadow:1px 1px 0 #003000">Long-term<br>memory</div>
<!-- handles -->
<div class="hd" style="left:564px;top:429px"></div>
<div class="hd" style="left:604px;top:429px"></div>
<div class="hd" style="left:525px;top:465px"></div>
<div class="hd" style="left:604px;top:465px"></div>
<div class="hd" style="left:525px;top:502px"></div>
<div class="hd" style="left:564px;top:502px"></div>
<div class="hd" style="left:604px;top:502px"></div>
<div class="a" style="left:524px;top:428px;width:10px;height:10px;border-radius:50%;background:#c8ec50;border:1px solid #2a3a10"></div>
<style>
.sh{position:absolute;left:900px;width:234px;height:27px;background:linear-gradient(#e2e2e2,#f0f0f0)}
.sh .tx{position:absolute;left:18px;top:9px;font-size:12px;letter-spacing:-.15px;font-weight:bold;color:#111;white-space:nowrap;line-height:1}
.pm{position:absolute;left:5px;top:8px;width:9px;height:9px;border:1px solid #222;background:#fff}
.pm:before{content:"";position:absolute;left:1px;top:3px;width:5px;height:1px;background:#111}
.pm.p:after{content:"";position:absolute;left:3px;top:1px;width:1px;height:5px;background:#111}
.mb{position:absolute;left:217px;top:5px;width:12px;height:10px;border:1px solid #2a5a90;background:#f8fbff}
.mb:before{content:"";position:absolute;left:0;top:0;right:0;height:2px;background:#6a9ad0}
.mb:after{content:"...";position:absolute;left:1px;top:-3px;font-size:9px;line-height:12px;color:#222;letter-spacing:-.5px}
.pl{position:absolute;font-size:12px;letter-spacing:-.15px;color:#111;white-space:nowrap;line-height:1}
.spin{position:absolute;background:#fff;border:1px solid #a9a9a9}
.spin .sb{position:absolute;right:1px;top:1px;bottom:1px;width:16px;background:linear-gradient(#f2f2f2,#dedede);border-left:1px solid #c8c8c8}
.spin .up{position:absolute;right:5px;top:4px;border-left:3.5px solid transparent;border-right:3.5px solid transparent;border-bottom:4px solid #202020}
.spin .dn{position:absolute;right:5px;bottom:4px;border-left:3.5px solid transparent;border-right:3.5px solid transparent;border-top:4px solid #202020}
.spin .mid{position:absolute;right:2px;top:10px;width:14px;height:1px;background:#c0c0c0}
.cbx{position:absolute;background:linear-gradient(#fbfbfb,#f4f4f4);border:1px solid #e6e6e6}
</style>
<div class="a" style="left:895px;top:117px;width:1px;height:604px;background:#a8a8a8"></div>
<div class="a" style="left:899px;top:117px;width:236px;height:604px;background:#f0f0f0;border-left:1px solid #e4e4e4;border-right:1px solid #e4e4e4"></div>
<div class="a" style="left:1135px;top:117px;width:40px;height:604px;background:#f0f0f0"></div>
<div class="a" style="left:1173px;top:117px;width:2px;height:604px;background:#a8a8a8"></div>
<div class="t" style="left:909px;top:128px;font-size:12px;letter-spacing:-.15px;font-weight:bold;color:#111">Properties</div>
<svg style="left:1120px;top:127px" width="9" height="9"><path d="M.5 .5L8.5 8.5M8.5 .5L.5 8.5" stroke="#505050" stroke-width="1.7"/></svg>

<div class="sh" style="top:147px"><div class="pm p"></div><div class="tx">Text</div><div class="mb"></div></div>
<div class="sh" style="top:174px"><div class="pm p"></div><div class="tx">Paragraph</div><div class="mb"></div></div>
<div class="sh" style="top:201px"><div class="pm"></div><div class="tx">Area</div><div class="mb"></div></div>

<div class="pl" style="left:906px;top:233px"><span class="ul">F</span>ill:</div>
<div class="combo" style="left:906px;top:251px;width:108px;height:23px"><div class="t" style="left:2px;top:5px;font-size:12px;letter-spacing:-.15px">Color</div><div class="cbtn"></div></div>
<div class="cbx" style="left:1020px;top:249px;width:99px;height:26px"></div>
<svg style="left:1028px;top:254px" width="16" height="14"><path d="M2 7l5-5 5 5-4.5 4.5z" fill="#d8e8f8" stroke="#3a5a80" stroke-width="1.2"/><path d="M12 7c1.5 1.5 2 3 1.5 5" fill="none" stroke="#2a6ac0" stroke-width="1.8"/></svg>
<div class="a" style="left:1045px;top:256px;width:57px;height:13px;background:#f7931e;border:1px solid #3a4a5a;box-shadow:inset 0 0 0 1px #fff"></div>
<div class="dd" style="left:1108px;top:261px"></div>

<div class="pl" style="left:906px;top:285px"><span class="ul">T</span>ransparency:</div>
<div class="combo" style="left:906px;top:303px;width:108px;height:23px"><div class="t" style="left:2px;top:5px;font-size:12px;letter-spacing:-.15px">None</div><div class="cbtn"></div></div>
<div class="spin" style="left:1020px;top:303px;width:108px;height:23px"><div class="t" style="left:2px;top:5px;font-size:12px;letter-spacing:-.15px">0%</div><div class="sb"></div><div class="mid"></div><div class="up"></div><div class="dn"></div></div>

<div class="sh" style="top:335px"><div class="pm"></div><div class="tx">Line</div><div class="mb"></div></div>
<div class="pl" style="left:906px;top:366px"><span class="ul">W</span>idth:</div>
<div class="pl" style="left:1020px;top:366px"><span class="ul">C</span>olor:</div>
<div class="cbx" style="left:906px;top:381px;width:100px;height:26px"></div>
<div class="a" style="left:910px;top:393px;width:77px;height:1px;background:#111"></div>
<div class="dd" style="left:994px;top:393px"></div>
<div class="cbx" style="left:1020px;top:381px;width:100px;height:26px"></div>
<svg style="left:1024px;top:386px" width="16" height="14"><path d="M2 11l2-4 7-6 2 2-6 7z" fill="#f0c040" stroke="#8a6a10" stroke-width=".8"/><path d="M2 13.5h14" stroke="#2a5aa0" stroke-width="1.2"/></svg>
<div class="a" style="left:1045px;top:387px;width:57px;height:13px;background:#808080;border:1px solid #3a4a5a;box-shadow:inset 0 0 0 1px #fff"></div>
<div class="dd" style="left:1108px;top:393px"></div>

<div class="pl" style="left:906px;top:420px"><span class="ul">S</span>tyle:</div>
<div class="pl" style="left:1020px;top:420px"><span class="ul">T</span>ransparency:</div>
<div class="combo" style="left:906px;top:437px;width:108px;height:23px"><div class="t" style="left:2px;top:5px;font-size:12px;letter-spacing:-.15px">- none -</div><div class="cbtn"></div></div>
<div class="spin" style="left:1020px;top:437px;width:108px;height:23px"><div class="t" style="left:2px;top:5px;font-size:12px;letter-spacing:-.15px">0%</div><div class="sb"></div><div class="mid"></div><div class="up"></div><div class="dn"></div></div>

<div class="pl" style="left:906px;top:475px"><span class="ul">A</span>rrow:</div>
<div class="combo" style="left:906px;top:491px;width:108px;height:23px"><div class="t" style="left:2px;top:5px;font-size:12px;letter-spacing:-.15px">- none -</div><div class="cbtn"></div></div>
<div class="combo" style="left:1020px;top:491px;width:108px;height:23px"><div class="t" style="left:2px;top:5px;font-size:12px;letter-spacing:-.15px">- none -</div><div class="cbtn"></div></div>

<div class="pl" style="left:906px;top:529px"><span class="ul">C</span>orner style</div>
<div class="pl" style="left:1020px;top:529px">Ca<span class="ul">p</span> style</div>
<div class="combo" style="left:906px;top:546px;width:108px;height:23px"><div class="t" style="left:2px;top:5px;font-size:12px;letter-spacing:-.15px">Rounded</div><div class="cbtn"></div></div>
<div class="combo" style="left:1020px;top:546px;width:108px;height:23px"><div class="t" style="left:2px;top:5px;font-size:12px;letter-spacing:-.15px">Flat</div><div class="cbtn"></div></div>

<div class="sh" style="top:578px"><div class="pm p"></div><div class="tx">Position and Size</div><div class="mb"></div></div>
<div class="a" style="left:900px;top:605px;width:234px;height:1px;background:#e2e2e2"></div>

<!-- sidebar tab bar -->
<svg style="left:1150px;top:131px" width="12" height="11"><path d="M0 1h8M0 3.5h8M0 6h8" stroke="#303030" stroke-width="1.2"/><path d="M5 7.5h6l-3 3z" fill="#111"/></svg>
<div class="a" style="left:1139px;top:155px;width:32px;height:1px;background:#e0e0e0"></div>
<div class="a" style="left:1139px;top:159px;width:32px;height:31px;border:1px solid #b0b4b8;border-radius:4px;background:#f4f4f4"></div>
<svg style="left:1145px;top:164px" width="20" height="21"><path d="M1 5L10 1 19 5 10 9z" fill="#6cc8f0"/><path d="M10 1L19 5 14.5 7 5.5 3z" fill="#9ade60"/><path d="M1 5L10 9V20L1 16z" fill="#2a98dc"/><path d="M10 9L19 5V16L10 20z" fill="#86cc3a"/><path d="M5.5 12.5L10 14.5 19 10.5M5.5 3L14.5 7V18M5.5 7v11M1 10.5l4.5 2" fill="none" stroke="#e8fff0" stroke-width=".9"/><path d="M1 10.5L10 14.5M14.5 3L5.5 7" fill="none" stroke="#e8fff0" stroke-width=".9"/></svg>
<svg style="left:1144px;top:198px" width="22" height="25"><rect x="1" y="1" width="20" height="17" fill="#f4f8fc" stroke="#4a78b0" stroke-width="1.2"/><rect x="3" y="3" width="16" height="2" fill="#4a78b0"/><path d="M5 22V11l1.5-3 1.5 3v11z" fill="#2a68c8"/><path d="M9.5 22V11l1.5-3 1.5 3v11z" fill="#f0a030"/><path d="M14 22V11l1.5-3 1.5 3v11z" fill="#48b848"/><rect x="3" y="23" width="16" height="1.5" fill="#c8ccd4"/></svg>
<svg style="left:1143px;top:233px" width="25" height="24"><path d="M17 10h6M18 13h5M17 16h5M16 19h4" stroke="#f0c070" stroke-width="1.1"/><path d="M10.5 1l3 6.5 7 .8-5.2 4.8 1.5 7-6.3-3.6-6.3 3.6 1.5-7L.5 8.3l7-.8z" fill="#f8c838" stroke="#d09010" stroke-width="1"/><path d="M10.5 4l2 4.5 4.5.5-3.5 3" fill="none" stroke="#fff2a0" stroke-width="1.2"/></svg>
<svg style="left:1143px;top:266px" width="24" height="26"><rect x="6" y="1" width="17" height="19" fill="#f0f4f8" stroke="#7a8aa0"/><path d="M9 5h10M9 8h10" stroke="#6a9ad0"/><rect x="1" y="8" width="15" height="16" fill="#f0f4f8" stroke="#7a8aa0"/><path d="M3 15h7M8 12l4 3-4 3" fill="none" stroke="#1a70c0" stroke-width="2.2"/><path d="M14 20l4-4 4 4" fill="#50a040"/></svg>
<svg style="left:1143px;top:302px" width="25" height="25"><path d="M4 22L9 7l12 9z" fill="#1a5ab0"/><path d="M9 7c4 2 7 5 7 9" fill="none" stroke="#2a2a50" stroke-width="1.5"/><path d="M14 17c3-3 6-2 8 1-2 3-5 4-8 2z" fill="#60b050"/><path d="M5 8c0-3 3-5 6-3-1 2-3 3-6 3z" fill="#e06030"/><path d="M13 2l1 2h2l-1.5 1.5.5 2-2-1-2 1 .5-2L10 4h2z" fill="#e070d0"/><path d="M21 5l1 2h2l-1.5 1.5.5 2-2-1-2 1 .5-2L18 7h2z" fill="#f8d040"/><path d="M3 10l1 2h2l-1.5 1.5.5 2-2-1-2 1 .5-2L0 12h2z" fill="#f070b0"/><path d="M20 12l1 2h2l-1.5 1.5.5 2-2-1-2 1 .5-2-1.5-1.5h2z" fill="#f070b0"/></svg>
<svg style="left:1143px;top:335px" width="24" height="27"><path d="M1 8l16-6 5 15-16 6z" fill="#e8f0e0" stroke="#6a8a70"/><path d="M4 9l11-4 4 10-11 4z" fill="#6ac0e8"/><path d="M5 17l4-5 3 3 3-4 4 5z" fill="#50b040"/><rect x="3" y="24" width="18" height="2" fill="#c8ccd0"/></svg>
<svg style="left:1143px;top:370px" width="24" height="26"><circle cx="12" cy="14" r="10" fill="#fff" stroke="#e89020" stroke-width="2.4"/><path d="M17 8l-6.5 5L7 20l6.5-5z" fill="#e03020"/><path d="M10.5 13l3 2L7 20z" fill="#3a7ad0"/><path d="M10 1.5v5l4-5v5" fill="none" stroke="#202020" stroke-width="1.2"/></svg>
<div class="a" style="left:899px;top:717px;width:236px;height:1px;background:#e2e2e2"></div>
<div class="a" style="left:889px;top:720px;width:286px;height:1px;background:#8e8e8e"></div>
<div class="a" style="left:8px;top:720px;width:216px;height:1px;background:#9a9a9a"></div>
<!-- drawing toolbar -->
<div class="a" style="left:8px;top:721px;width:1167px;height:32px;background:#f4f5f7"></div>
<div class="a" style="left:8px;top:721px;width:790px;height:31px;background:linear-gradient(#f6f7f9,#f1f2f4);border-right:1px solid #d6d8db;border-bottom:1px solid #d6d8db"></div>
<div class="a" style="left:8px;top:752px;width:1167px;height:1px;background:#a8aaac"></div>
<div class="grip" style="left:12px;top:727px;height:18px"></div>
<div class="a" style="left:20px;top:724px;width:25px;height:27px;background:#c4dcf4;border:1px solid #8db6e2"></div>
<svg style="left:27px;top:729px" width="12" height="16"><path d="M1.5 1v12l3-3 2.5 5 2-1-2.5-5h4z" fill="#fff" stroke="#202020" stroke-width="1.1"/></svg>
<div class="sep" style="left:49px;top:729px;height:15px"></div>
<svg style="left:57px;top:729px" width="15" height="15"><path d="M1 14L14 1" stroke="#3a5a90" stroke-width="1.4"/></svg>
<svg style="left:82px;top:730px" width="15" height="13"><path d="M1 6.5h12M8 1.5l5 5-5 5" fill="none" stroke="#2a6ac8" stroke-width="1.8"/></svg>
<svg style="left:106px;top:731px" width="16" height="11"><rect x=".5" y=".5" width="15" height="10" fill="#4a90e0" stroke="#1a4a90"/><rect x="1.5" y="1.5" width="13" height="3" fill="#90c4f4"/></svg>
<svg style="left:132px;top:731px" width="16" height="11"><ellipse cx="8" cy="5.5" rx="7.5" ry="5" fill="#4a90e0" stroke="#1a4a90"/><ellipse cx="8" cy="3.5" rx="5" ry="2" fill="#90c4f4"/></svg>
<svg style="left:158px;top:729px" width="14" height="15"><path d="M1 1h12v4h-1.5l-1-2H8.5v10h2v1.5h-7V13h2V3H3.5l-1 2H1z" fill="#2a4a78"/></svg>
<div class="sep" style="left:182px;top:729px;height:15px"></div>
<svg style="left:189px;top:728px" width="17" height="17"><path d="M2 12c2-4 4-5 6-3s4 3 8-1" fill="none" stroke="#2a6ac8" stroke-width="1.6"/><path d="M7 9l1-3 7-6 2 2-7 7z" fill="#f0c040" stroke="#8a6a10" stroke-width=".8"/><path d="M14 1l2 2 1-1-2-2z" fill="#e07070"/></svg>
<div class="dd" style="left:213px;top:735px"></div>
<svg style="left:225px;top:729px" width="16" height="15"><path d="M3 3.5L8 6.5V9.5L13 12" fill="none" stroke="#2a5aa0" stroke-width="1.4"/><circle cx="3" cy="3" r="2.5" fill="#4a90e0" stroke="#2a5aa0"/><circle cx="13" cy="12" r="2.5" fill="#4a90e0" stroke="#2a5aa0"/></svg>
<div class="dd" style="left:249px;top:735px"></div>
<svg style="left:260px;top:728px" width="17" height="17"><path d="M8.5 1l7.5 7.5-7.5 7.5L1 8.5z" fill="#6aaaf0" stroke="#1a4a90"/><path d="M8.5 2.5l6 6H2.5z" fill="#a8d4fa" opacity=".7"/></svg>
<div class="dd" style="left:285px;top:735px"></div>
<svg style="left:296px;top:728px" width="17" height="17"><circle cx="8.5" cy="8.5" r="7.5" fill="#5aa0e8" stroke="#1a5aa8"/><circle cx="8.5" cy="6" r="5" fill="#a8d4f8" opacity=".6"/><circle cx="6" cy="7" r="1" fill="#102040"/><circle cx="11" cy="7" r="1" fill="#102040"/><path d="M5 10c2 3 5 3 7 0" fill="none" stroke="#102040" stroke-width="1.1"/></svg>
<div class="dd" style="left:320px;top:735px"></div>
<svg style="left:333px;top:730px" width="16" height="13"><path d="M1 6.5l4.5-5v3h5v-3l4.5 5-4.5 5v-3h-5v3z" fill="#b8d4f4" stroke="#2a5aa0" stroke-width="1.1"/></svg>
<div class="dd" style="left:357px;top:735px"></div>
<svg style="left:370px;top:729px" width="15" height="15"><rect x=".5" y=".5" width="14" height="14" fill="#5a9ce8" stroke="#1a4a90"/><rect x="4" y="4" width="10" height="10" fill="#8ec4f4"/><path d="M.5 3.5h14M3.5 3.5v11" stroke="#1a4a90"/></svg>
<div class="dd" style="left:393px;top:735px"></div>
<svg style="left:404px;top:729px" width="17" height="16"><path d="M1.5 1.5h14v9H6l-4 4v-4H1.5z" fill="#4a9ae8" stroke="#1a5aa8" stroke-linejoin="round"/><path d="M3 3h11v3H3z" fill="#a8d4f8" opacity=".6"/></svg>
<div class="dd" style="left:430px;top:735px"></div>
<svg style="left:440px;top:728px" width="17" height="17"><path d="M8.5 1l2.2 5 5.3.5-4 3.6 1.2 5.4-4.7-2.8-4.7 2.8 1.2-5.4-4-3.6 5.3-.5z" fill="#4a90e0" stroke="#1a4a90"/></svg>
<div class="dd" style="left:465px;top:735px"></div>
<div class="sep" style="left:477px;top:729px;height:15px"></div>
<svg style="left:486px;top:728px" width="16" height="17"><path d="M2 14L6 4l9-2-3 12z" fill="none" stroke="#2a3a50" stroke-width="1.2"/><rect x="0" y="12" width="4" height="4" fill="#fff" stroke="#202020"/><rect x="4" y="2" width="4" height="4" fill="#fff" stroke="#202020"/><rect x="13" y="0" width="3.5" height="3.5" fill="#fff" stroke="#202020"/><rect x="10" y="12" width="4" height="4" fill="#fff" stroke="#202020"/></svg>
<svg style="left:511px;top:728px" width="16" height="17"><path d="M1 16l6-7" stroke="#5a6a80" stroke-width="1.6"/><path d="M6 10l2-4 6-5 2 2-5 6z" fill="#f0b830" stroke="#8a6a10" stroke-width=".8"/></svg>
<div class="sep" style="left:535px;top:729px;height:15px"></div>
<svg style="left:544px;top:728px" width="16" height="17"><path d="M3 3h10v13H3z" fill="#f6e8c8" stroke="#a06010" stroke-width="1.3"/><path d="M5 4l3-3 3 3" fill="none" stroke="#404040"/><text x="8" y="14" font-size="8" font-weight="bold" fill="#2a4a90" text-anchor="middle" font-family="Liberation Sans">A</text></svg>
<svg style="left:568px;top:728px" width="17" height="17"><circle cx="11" cy="6" r="5.5" fill="#f0c040" stroke="#a07810"/><path d="M1 8h8v8H1z" fill="#e8502a" stroke="#902a10"/><path d="M9 6l5 10H4z" fill="#4a90e0" stroke="#1a4a90"/></svg>
<svg style="left:593px;top:728px" width="17" height="17"><path d="M5 4l3.5-3 3.5 3" fill="none" stroke="#404040"/><rect x="1" y="4" width="15" height="12" fill="#f0c870" stroke="#a06010" stroke-width="1.3"/><rect x="3.5" y="6.5" width="10" height="7" fill="#6ab04a"/><path d="M3.5 10l3-2 3 2 4-2v5.5h-10z" fill="#3a8a30"/></svg>
<div class="sep" style="left:618px;top:729px;height:15px"></div>
<svg style="left:626px;top:729px" width="16" height="15"><path d="M3 10a6 6 0 1 1 9 1" fill="none" stroke="#5a7898" stroke-width="3"/><path d="M5 7a3 3 0 1 1 5 2" fill="none" stroke="#a8c0d8" stroke-width="1.6"/><path d="M9 14l5-5 1 6z" fill="#3a5a80"/></svg>
<svg style="left:652px;top:729px" width="16" height="16"><rect x=".5" y=".5" width="7" height="15" fill="#e8f4e0" stroke="#5aa040"/><rect x="8" y="2.5" width="7.5" height="11" fill="#f4f4f4" stroke="#8a8a8a"/><path d="M14 8H5M8 5L5 8l3 3" fill="none" stroke="#e0402a" stroke-width="1.6"/></svg>
<div class="dd" style="left:675px;top:735px"></div>
<svg style="left:687px;top:728px" width="17" height="17"><rect x="1" y="6" width="10" height="10" fill="#3a6aa8" stroke="#1a3a70"/><rect x="5.5" y="1.5" width="10" height="10" fill="#f8c838" stroke="#a07810"/></svg>
<div class="dd" style="left:711px;top:735px"></div>
<div class="sep" style="left:723px;top:729px;height:15px"></div>
<svg style="left:731px;top:728px" width="17" height="17"><path d="M1 3h6v6H1z" fill="#e8502a"/><path d="M6 9l5-3 5 3v6l-5 2-5-2z" fill="#6aa8e8" stroke="#1a4a90"/><path d="M6 9l5 2 5-2M11 11v6" fill="none" stroke="#1a4a90"/><path d="M4 9v4h3" fill="none" stroke="#2a70c0" stroke-width="1.4"/></svg>
<svg style="left:756px;top:728px" width="17" height="17"><g stroke="#f08a30" stroke-width="1.3"><path d="M6 1v4M6 11v4M1 8h3M8 8h3M2.5 3.5l2 2M9.5 10.5l2 2M9.5 3.5l-2 2M2.5 12.5l2-2"/></g><path d="M9 5v11l2.5-2.5 2 4 1.5-.8-2-4h3.5z" fill="#fff" stroke="#202020"/></svg>
<div class="a" style="left:785px;top:722px;width:10px;height:29px;background:linear-gradient(#f4f4f4,#9a9a9a)"></div>
<div class="dd" style="left:787px;top:743px"></div>

<!-- status bar -->
<div class="a" style="left:8px;top:753px;width:1167px;height:22px;background:#f0f0f0"></div>
<div class="t" style="left:19px;top:759px;font-size:12px;letter-spacing:-.15px;color:#111">Shape 'AutoShape 3' selected</div>
<div class="a" style="left:420px;top:756px;width:1px;height:18px;background:#c8c8c8"></div>
<svg style="left:428px;top:757px" width="16" height="14"><path d="M3.5 0v7M0 3.5h7" stroke="#2a3a50"/><path d="M3.5 7.5h11v4h-11z" fill="none" stroke="#2a3a50" stroke-dasharray="1 1"/></svg>
<div class="t" style="left:448px;top:759px;font-size:12px;letter-spacing:-.15px;color:#111">6.69 / 5.51</div>
<svg style="left:535px;top:756px" width="14" height="15"><rect x="3.5" y="3.5" width="8" height="9" fill="none" stroke="#2a3a50" stroke-dasharray="1 1"/><rect x="2" y="2" width="3" height="3" fill="#2a3a50"/><rect x="10" y="2" width="3" height="3" fill="#2a3a50"/><path d="M0 8h2M0 11h2" stroke="#2a3a50"/></svg>
<div class="t" style="left:555px;top:759px;font-size:12px;letter-spacing:-.15px;color:#111">1.78 x 1.67</div>
<div class="a" style="left:641px;top:756px;width:1px;height:18px;background:#c8c8c8"></div>
<div class="t" style="left:645px;top:759px;font-size:12px;letter-spacing:-.15px;color:#111">*</div>
<div class="a" style="left:657px;top:756px;width:1px;height:18px;background:#c8c8c8"></div>
<div class="a" style="left:686px;top:756px;width:1px;height:18px;background:#c8c8c8"></div>
<div class="t" style="left:689px;top:759px;font-size:12px;letter-spacing:-.15px;color:#111">Slide 11 / 46</div>
<div class="a" style="left:757px;top:756px;width:1px;height:18px;background:#c8c8c8"></div>
<div class="t" style="left:762px;top:759px;font-size:12px;letter-spacing:-.15px;color:#111">Title2</div>
<div class="a" style="left:995px;top:756px;width:1px;height:18px;background:#c8c8c8"></div>
<svg style="left:1000px;top:758px" width="13" height="13"><circle cx="6.5" cy="6.5" r="5.7" fill="#dce6f0" stroke="#3a5070" stroke-width="1.2"/><path d="M3.5 6.5h6" stroke="#1a2a40" stroke-width="1.3"/></svg>
<div class="a" style="left:1017px;top:764px;width:98px;height:1px;background:#606060"></div>
<div class="a" style="left:1064px;top:760px;width:1px;height:9px;background:#606060"></div>
<svg style="left:1032px;top:760px" width="10" height="10"><circle cx="5" cy="5" r="4.2" fill="#7890a8" stroke="#2a3a50" stroke-width="1.1"/></svg>
<svg style="left:1119px;top:758px" width="13" height="13"><circle cx="6.5" cy="6.5" r="5.7" fill="#dce6f0" stroke="#3a5070" stroke-width="1.2"/><path d="M3.5 6.5h6M6.5 3.5v6" stroke="#1a2a40" stroke-width="1.3"/></svg>
<div class="a" style="left:1138px;top:756px;width:1px;height:18px;background:#c8c8c8"></div>
<div class="t" style="left:1143px;top:759px;font-size:12px;letter-spacing:-.15px;color:#111">46%</div>
</body></html>
